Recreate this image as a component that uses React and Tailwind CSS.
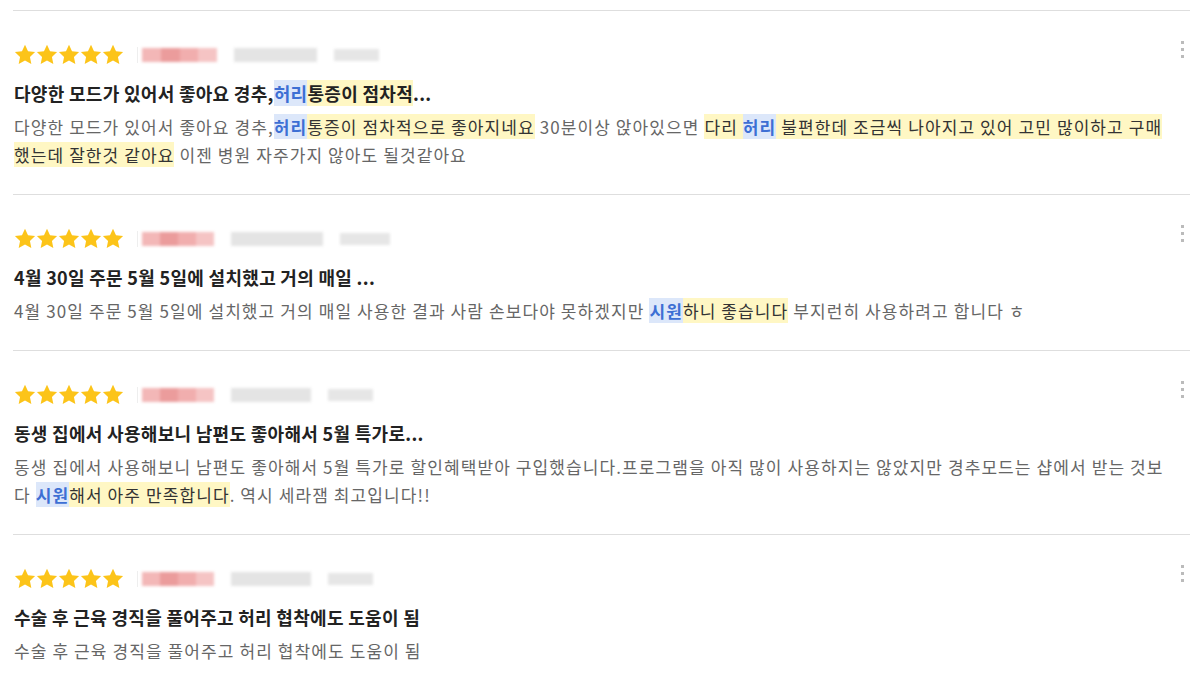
const reviews = [
  {
    title: [
      ['다양한 모드가 있어서 좋아요 경추,', ''],
      ['허리', 'b'],
      ['통증이 점차적', 'y'],
      ['...', ''],
    ],
    body: [
      ['다양한 모드가 있어서 좋아요 경추,', ''],
      ['허리', 'b'],
      ['통증이 점차적으로 좋아지네요', 'y'],
      [' 30분이상 앉아있으면 ', ''],
      ['다리 ', 'y'],
      ['허리', 'b'],
      [' 불편한데 조금씩 나아지고 있어 고민 많이하고 구매했는데 잘한것 같아요', 'y'],
      [' 이젠 병원 자주가지 않아도 될것같아요', ''],
    ],
    meta: [75, 83, 45],
  },
  {
    title: [['4월 30일 주문 5월 5일에 설치했고 거의 매일 ...', '']],
    body: [
      ['4월 30일 주문 5월 5일에 설치했고 거의 매일 사용한 결과 사람 손보다야 못하겠지만 ', ''],
      ['시원', 'b'],
      ['하니 좋습니다', 'y'],
      [' 부지런히 사용하려고 합니다 ㅎ', ''],
    ],
    meta: [72, 92, 50],
  },
  {
    title: [['동생 집에서 사용해보니 남편도 좋아해서 5월 특가로...', '']],
    body: [
      ['동생 집에서 사용해보니 남편도 좋아해서 5월 특가로 할인혜택받아 구입했습니다.프로그램을 아직 많이 사용하지는 않았지만 경추모드는 샵에서 받는 것보다 ', ''],
      ['시원', 'b'],
      ['해서 아주 만족합니다', 'y'],
      ['. 역시 세라잼 최고입니다!!', ''],
    ],
    meta: [72, 80, 45],
  },
  {
    title: [['수술 후 근육 경직을 풀어주고 허리 협착에도 도움이 됨', '']],
    body: [['수술 후 근육 경직을 풀어주고 허리 협착에도 도움이 됨', '']],
    meta: [72, 80, 45],
  },
]

function Star() {
  return (
    <svg viewBox="0 0 24 24" className="w-[22px] h-[22px]">
      <path
        d="M12 0.8l3.3 7 7.7 1-5.6 5.3 1.5 7.6L12 18l-6.9 3.7 1.5-7.6L1 8.8l7.7-1z"
        fill="#fcc419"
      />
    </svg>
  )
}

function Segs({ parts, dark }) {
  return parts.map(([t, k], i) => {
    if (k === 'b')
      return (
        <span key={i} className="bg-[#dce7fa] text-[#3d6fd4] font-bold">
          {t}
        </span>
      )
    if (k === 'y')
      return (
        <span key={i} className={`bg-[#fff7c4] ${dark ? '' : 'text-[#333]'}`}>
          {t}
        </span>
      )
    return <span key={i}>{t}</span>
  })
}

function Review({ r }) {
  return (
    <div className="relative ml-[13px] w-[1177px] border-t border-[#dedede] pt-[33px] pb-[25px] pl-[1px]">
      <div className="flex items-center h-[22px]">
        <div className="flex">
          {[0, 1, 2, 3, 4].map(i => (
            <Star key={i} />
          ))}
        </div>
        <div className="w-px h-[16px] bg-[#eee] ml-[13px]" />
        <div className="ml-[4px] flex items-center gap-[17px] blur-[1.5px]">
          <div className="relative h-[14px]" style={{ width: r.meta[0] }}>
            <div className="absolute inset-0 flex">
              <div className="flex-1 bg-[#f3b7b7]" />
              <div className="flex-1 bg-[#eb9c9c]" />
              <div className="flex-1 bg-[#f1aeae]" />
              <div className="flex-1 bg-[#f5c4c4]" />
            </div>
          </div>
          <div className="h-[14px] bg-[#e4e4e4]" style={{ width: r.meta[1] }} />
          <div className="h-[12px] bg-[#e6e6e6]" style={{ width: r.meta[2] }} />
        </div>
      </div>
      <div className="mt-[14px] text-[18px] leading-[26px] tracking-[0.3px] font-bold text-[#222]">
        <Segs parts={r.title} dark />
      </div>
      <div className="mt-[7px] w-[1157px] text-[17px] leading-[28px] tracking-[1.1px] text-[#666]">
        <Segs parts={r.body} />
      </div>
      <div className="absolute right-[6px] top-[30px] flex flex-col gap-[4px]">
        <div className="w-[3px] h-[3px] bg-[#bbb]" />
        <div className="w-[3px] h-[3px] bg-[#bbb]" />
        <div className="w-[3px] h-[3px] bg-[#bbb]" />
      </div>
    </div>
  )
}

export default function App() {
  return (
    <div
      className="bg-white w-[1203px] h-[677px] overflow-hidden pt-[10px]"
      style={{ fontFamily: '"Noto Sans CJK KR", "Noto Sans", sans-serif' }}
    >
      {reviews.map((r, i) => (
        <Review key={i} r={r} />
      ))}
    </div>
  )
}
